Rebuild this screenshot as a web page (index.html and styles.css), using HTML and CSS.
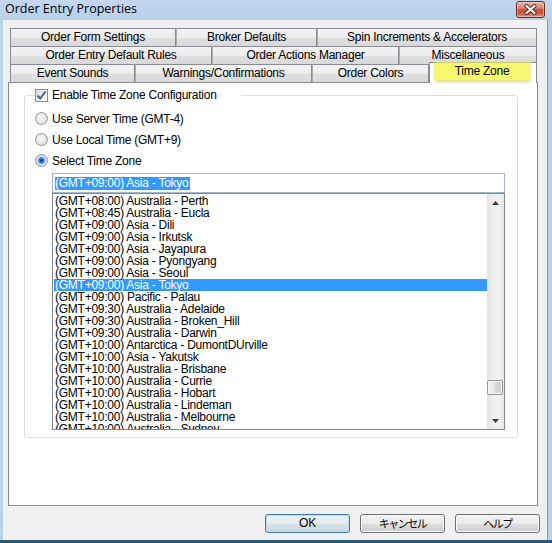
FILE: index.html
```html
<!DOCTYPE html>
<html>
<head>
<meta charset="utf-8">
<title>Order Entry Properties</title>
<link rel="stylesheet" href="styles.css">
</head>
<body>
<div class="window">
  <div class="titlebar">
    <span class="title">Order Entry Properties</span>
    <div class="close">
      <svg width="13" height="11" viewBox="0 0 13 11">
        <path d="M2.5 2 L10.5 9 M10.5 2 L2.5 9" stroke="#4a2a25" stroke-width="4" stroke-linecap="round"/>
        <path d="M2.5 2 L10.5 9 M10.5 2 L2.5 9" stroke="#ffffff" stroke-width="2.2" stroke-linecap="round"/>
      </svg>
    </div>
  </div>
  <div class="client">
    <div class="tabs">
      <div class="tabrow">
        <div class="tab t166">Order Form Settings</div>
        <div class="tab t141">Broker Defaults</div>
        <div class="tab t220">Spin Increments &amp; Accelerators</div>
      </div>
      <div class="tabrow">
        <div class="tab t202">Order Entry Default Rules</div>
        <div class="tab t187">Order Actions Manager</div>
        <div class="tab t138">Miscellaneous</div>
      </div>
      <div class="tabrow">
        <div class="tab t125">Event Sounds</div>
        <div class="tab t177">Warnings/Confirmations</div>
        <div class="tab t117">Order Colors</div>
        <div class="tab t108 active"><span class="hl">Time Zone</span></div>
      </div>
    </div>
    <div class="panel">
      <fieldset class="group">
        <legend class="legend">
          <span class="check">
            <svg width="11" height="11" viewBox="0 0 11 11"><path d="M1.5 5.5 L4.2 8.5 L9.5 1.5" fill="none" stroke="#4a5f97" stroke-width="2"/></svg>
          </span>
          <span>Enable Time Zone Configuration</span>
        </legend>
        <div class="opt"><span class="radio"></span><span>Use Server Time (GMT-4)</span></div>
        <div class="opt"><span class="radio"></span><span>Use Local Time (GMT+9)</span></div>
        <div class="opt"><span class="radio on"></span><span>Select Time Zone</span></div>
        <div class="combo">
          <div class="edit"><span class="selected-text">(GMT+09:00) Asia - Tokyo</span><span class="caret"></span></div>
          <div class="list">
            <div class="items">
              <div class="item">(GMT+08:00) Australia - Perth</div>
              <div class="item">(GMT+08:45) Australia - Eucla</div>
              <div class="item">(GMT+09:00) Asia - Dili</div>
              <div class="item">(GMT+09:00) Asia - Irkutsk</div>
              <div class="item">(GMT+09:00) Asia - Jayapura</div>
              <div class="item">(GMT+09:00) Asia - Pyongyang</div>
              <div class="item">(GMT+09:00) Asia - Seoul</div>
              <div class="item sel">(GMT+09:00) Asia - Tokyo</div>
              <div class="item">(GMT+09:00) Pacific - Palau</div>
              <div class="item">(GMT+09:30) Australia - Adelaide</div>
              <div class="item">(GMT+09:30) Australia - Broken_Hill</div>
              <div class="item">(GMT+09:30) Australia - Darwin</div>
              <div class="item">(GMT+10:00) Antarctica - DumontDUrville</div>
              <div class="item">(GMT+10:00) Asia - Yakutsk</div>
              <div class="item">(GMT+10:00) Australia - Brisbane</div>
              <div class="item">(GMT+10:00) Australia - Currie</div>
              <div class="item">(GMT+10:00) Australia - Hobart</div>
              <div class="item">(GMT+10:00) Australia - Lindeman</div>
              <div class="item">(GMT+10:00) Australia - Melbourne</div>
              <div class="item">(GMT+10:00) Australia - Sydney</div>
            </div>
            <div class="vscroll">
              <div class="sb-btn"><svg width="7" height="4" viewBox="0 0 7 4"><path d="M0 4 L3.5 0 L7 4 Z" fill="#3c3c3c"/></svg></div>
              <div class="sb-track"><div class="thumb" style="margin-top:169px"></div></div>
              <div class="sb-btn"><svg width="7" height="4" viewBox="0 0 7 4"><path d="M0 0 L7 0 L3.5 4 Z" fill="#3c3c3c"/></svg></div>
            </div>
          </div>
        </div>
      </fieldset>
    </div>
    <div class="buttons">
      <button class="btn default">OK</button>
      <button class="btn"><span class="jp">キャンセル</span></button>
      <button class="btn"><span class="jp">ヘルプ</span></button>
    </div>
  </div>
</div>
</body>
</html>
```
FILE: styles.css
```css
html, body {
  margin: 0;
  padding: 0;
}

.window {
  width: 552px;
  height: 543px;
  box-sizing: border-box;
  display: flex;
  flex-direction: column;
  padding-bottom: 3px;
  background: linear-gradient(to top, #24506a 0, #2f5f7a 3px, #bad1ea 3px, #bad1ea 100%);
  font-family: "Liberation Sans", "Noto Sans CJK JP", sans-serif;
  font-size: 12px;
  letter-spacing: -0.25px;
  color: #000;
}

.titlebar {
  height: 20px;
  flex: none;
  display: flex;
  align-items: flex-start;
  justify-content: space-between;
  background: linear-gradient(to bottom, #c3d7ee, #b9d0e9);
}

.title {
  font-family: "Open Sans", "Liberation Sans", sans-serif;
  font-size: 12.5px;
  letter-spacing: 0;
  line-height: 18px;
  margin-left: 5px;
}

.close {
  width: 29px;
  height: 17px;
  box-sizing: border-box;
  margin: 1px 7px 0 0;
  border: 1px solid #6e2b22;
  border-radius: 3px;
  background: linear-gradient(to bottom, #eab0a2, #da8a76 40%, #c4523b 52%, #c9583f 75%, #e0977c);
  box-shadow: inset 0 0 0 1px rgba(255, 255, 255, 0.35);
  display: flex;
  align-items: center;
  justify-content: center;
}

.client {
  flex: 1;
  margin: 0 4px 0 3px;
  background: #f0f0f0;
  border-right: 1px solid #8d9aa8;
  padding: 8px 0 0 5px;
  display: flex;
  flex-direction: column;
}

.tabs {
  margin-left: 2px;
  width: 527px;
}

.tabrow {
  display: flex;
  height: 18px;
  align-items: flex-start;
}

.tab {
  box-sizing: border-box;
  height: 18px;
  border: 1px solid #898c95;
  border-bottom: none;
  background: linear-gradient(to bottom, #f4f4f4, #ececec 50%, #e0e0e0 52%, #d9d9d9);
  text-align: center;
  line-height: 17px;
  white-space: nowrap;
  overflow: hidden;
}

.tab + .tab {
  border-left-color: #a9acb3;
}

.t166 { width: 166px; }
.t141 { width: 141px; }
.t220 { width: 220px; }
.t202 { width: 202px; }
.t187 { width: 187px; }
.t138 { width: 138px; }
.t125 { width: 125px; }
.t177 { width: 177px; }
.t117 { width: 117px; }
.t108 { width: 108px; }

.tab.active {
  height: 21px;
  margin-top: -2px;
  background: #ffffff;
  border-left-color: #898c95;
  position: relative;
  z-index: 1;
  padding: 0 7px 0 5px;
  overflow: visible;
}

.hl {
  display: block;
  height: 17px;
  line-height: 17px;
  background: #f8f86e;
  box-shadow: 0 0 2px 1px rgba(245, 245, 90, 0.9), 1px 2px 3px rgba(120, 120, 80, 0.35);
}

.panel {
  width: 530px;
  height: 424px;
  box-sizing: border-box;
  border: 1px solid #898c95;
  background: #ffffff;
  flex: none;
}

.group {
  margin: 5px 19px 0 15px;
  padding: 5px 11px 7px 10px;
  border: 1px solid #d5dfe5;
  border-radius: 3px;
  min-width: 0;
}

.legend {
  display: flex;
  align-items: center;
  gap: 4px;
  height: 15px;
  line-height: 15px;
  padding: 0 24px 0 0;
}

.check {
  width: 13px;
  height: 13px;
  box-sizing: border-box;
  border: 1px solid #8e8f8f;
  background: linear-gradient(135deg, #dcdcdc, #ffffff);
  display: flex;
  align-items: center;
  justify-content: center;
}

.opt {
  display: flex;
  align-items: center;
  gap: 4px;
  height: 21px;
}

.radio {
  width: 13px;
  height: 13px;
  box-sizing: border-box;
  border-radius: 50%;
  border: 1px solid #939393;
  background: radial-gradient(circle at 45% 45%, #fbfbfb 0, #e9e9e9 45%, #cfcfcf 100%);
}

.radio.on {
  background: radial-gradient(circle at 50% 50%, #0b3f7e 0, #1f63ad 1.5px, #5aa6e4 3px, #9ccbef 3.8px, #e6e6e6 4.3px, #d2d2d2 100%);
}

.combo {
  margin-top: 2px;
  margin-left: 17px;
  width: 453px;
}

.edit {
  height: 20px;
  box-sizing: border-box;
  border: 1px solid #a3b8ce;
  display: flex;
  align-items: center;
  padding-left: 2px;
}

.selected-text {
  background: #3399ff;
  color: #ffffff;
  height: 13px;
  line-height: 13px;
  white-space: nowrap;
}

.caret {
  width: 1px;
  height: 13px;
  background: #e0701c;
}

.list {
  height: 237px;
  box-sizing: border-box;
  border: 1px solid #828790;
  display: flex;
}

.items {
  flex: 1;
  overflow: hidden;
  padding: 1px 0 0 1px;
}

.item {
  height: 12px;
  line-height: 12px;
  padding-left: 1px;
  white-space: nowrap;
}

.item.sel {
  background: #3399ff;
  color: #ffffff;
}

.vscroll {
  width: 17px;
  flex: none;
  display: flex;
  flex-direction: column;
  background: linear-gradient(to right, #e2e2e2, #ededed 25%, #f1f1f1 75%, #e6e6e6);
}

.sb-btn {
  height: 17px;
  display: flex;
  align-items: center;
  justify-content: center;
}

.sb-track {
  flex: 1;
}

.thumb {
  width: 16px;
  height: 15px;
  box-sizing: border-box;
  border: 1px solid #979797;
  border-radius: 2px;
  background: linear-gradient(to right, #f5f5f5, #e6e6e6 50%, #d7d7d7 52%, #cfcfcf);
  box-shadow: inset 0 0 0 1px #f8f8f8;
}

.buttons {
  display: flex;
  justify-content: flex-end;
  gap: 10px;
  margin-top: 8px;
  padding-right: 7px;
}

.btn {
  width: 85px;
  height: 19px;
  box-sizing: border-box;
  padding: 0;
  border: 1px solid #707070;
  border-radius: 3px;
  background: linear-gradient(to bottom, #f2f2f2, #ebebeb 50%, #dddddd 52%, #cfcfcf);
  box-shadow: inset 0 0 0 1px #fbfbfb;
  font-family: "Liberation Sans", "Noto Sans CJK JP", sans-serif;
  font-size: 12px;
  letter-spacing: -0.25px;
  color: #000;
  line-height: 17px;
}

.btn.default {
  border-color: #3c7fb1;
  background: linear-gradient(to bottom, #eef3f7, #e4eaef 50%, #d7dfe6 52%, #cfd7de);
  box-shadow: inset 0 0 0 1px #b6dcf3;
}

.jp {
  font-family: "Noto Sans CJK JP", sans-serif;
  font-size: 11px;
  letter-spacing: -1.5px;
}
```
